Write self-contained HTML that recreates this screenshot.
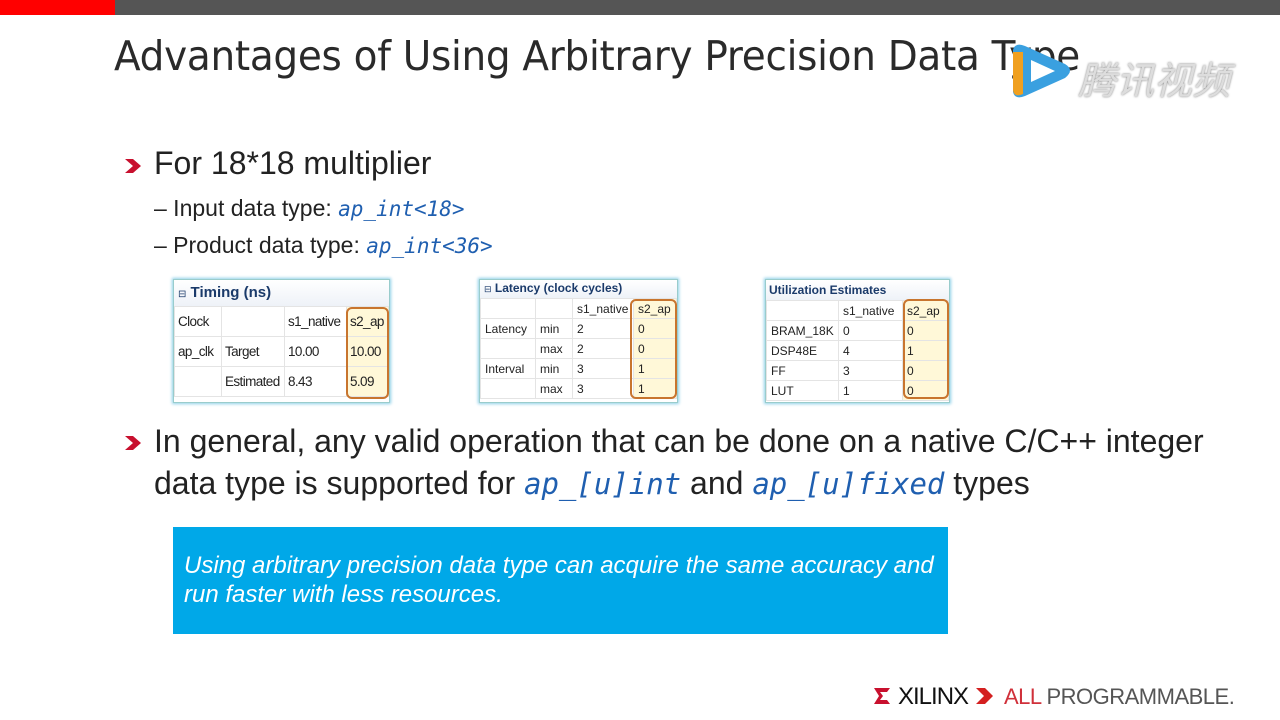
<!DOCTYPE html>
<html><head><meta charset="utf-8"><style>
body{margin:0;width:1280px;height:720px;position:relative;background:#fff;font-family:"Liberation Sans",Arial,sans-serif;overflow:hidden;color:#222}
.a{position:absolute;white-space:nowrap}
.code{font-family:"DejaVu Sans Mono",monospace;font-style:italic;color:#1f5fb0}
.chev{position:absolute;width:18px;height:18px}
.tb{position:absolute;background:#fff;border:1px solid #9cc;box-shadow:0 0 3px 1px #8fd0e8;font-size:12px;color:#222;overflow:hidden}
.tb table{border-collapse:collapse;table-layout:fixed;width:100%}
.tb td{border:1px solid #e4e4e4;padding:0 0 0 4px;height:19px;overflow:hidden;white-space:nowrap}
.hd{font-weight:bold;color:#1a3a6a;background:linear-gradient(#fff,#eef2f8)}
.y{background:#fff8d8}
.hl{position:absolute;border:2px solid #c8752e;border-radius:6px}
.nar td{font-size:13.5px;letter-spacing:-0.6px;padding-left:3px}
</style></head><body>
<div class="a" style="left:0;top:0;width:115px;height:15px;background:#f00"></div>
<div class="a" style="left:115px;top:0;width:1165px;height:15px;background:#555"></div>
<div class="a" style="left:114px;top:32px;font-size:41px;color:#2a2a2a;font-family:'DejaVu Sans',sans-serif;letter-spacing:-0.3px;transform:scaleX(0.95);transform-origin:left">Advantages of Using Arbitrary Precision Data Type</div>
<svg class="a" style="left:1005px;top:40px" width="80" height="64"><path d="M8 10 Q10 2 20 6 L60 24 Q70 30 60 38 L20 56 Q10 60 8 52Z" fill="#3aa0e0"/><path d="M8 12 L8 50 Q9 58 18 54 L18 12Z" fill="#f0a020"/><path d="M26 20 L50 31 L26 42Z" fill="#fff"/></svg>
<div class="a" style="left:1078px;top:50px;font-size:38px;color:#ddd;font-style:italic;font-family:'Noto Sans CJK SC',sans-serif;text-shadow:0 0 2px #777">腾讯视频</div>

<svg class="chev" style="left:124px;top:157px" viewBox="0 0 18 18"><path d="M1 2h8l8 7-8 7H1l8-7z" fill="#c8102e"/></svg>
<div class="a" style="left:154px;top:145px;font-size:32px">For 18*18 multiplier</div>
<div class="a" style="left:154px;top:195px;font-size:23px">– Input data type: <span class="code" style="font-size:21px">ap_int&lt;18&gt;</span></div>
<div class="a" style="left:154px;top:232px;font-size:23px">– Product data type: <span class="code" style="font-size:21px">ap_int&lt;36&gt;</span></div>

<div class="tb nar" style="left:173px;top:279px;width:215px;height:122px;font-size:15px">
<div style="height:26px;line-height:26px;padding-left:4px" class="hd"><span style="font-weight:normal;font-size:10px">⊟</span> Timing (ns)</div>
<table><colgroup><col style="width:47px"><col style="width:63px"><col style="width:62px"><col></colgroup>
<tr><td style="height:29px">Clock</td><td></td><td>s1_native</td><td class="y">s2_ap</td></tr>
<tr><td style="height:29px">ap_clk</td><td>Target</td><td>10.00</td><td class="y">10.00</td></tr>
<tr><td style="height:29px"></td><td>Estimated</td><td>8.43</td><td class="y">5.09</td></tr></table>
<div class="hl" style="left:172px;top:27px;width:39px;height:88px"></div></div>

<div class="tb" style="left:479px;top:279px;width:197px;height:122px;font-size:12px">
<div style="height:18px;line-height:17px;padding-left:4px" class="hd"><span style="font-weight:normal;font-size:9px">⊟</span> Latency (clock cycles)</div>
<table><colgroup><col style="width:55px"><col style="width:37px"><col style="width:61px"><col></colgroup>
<tr><td></td><td></td><td>s1_native</td><td class="y">s2_ap</td></tr>
<tr><td>Latency</td><td>min</td><td>2</td><td class="y">0</td></tr>
<tr><td></td><td>max</td><td>2</td><td class="y">0</td></tr>
<tr><td>Interval</td><td>min</td><td>3</td><td class="y">1</td></tr>
<tr><td></td><td>max</td><td>3</td><td class="y">1</td></tr></table>
<div class="hl" style="left:150px;top:19px;width:43px;height:96px"></div></div>

<div class="tb" style="left:765px;top:279px;width:183px;height:122px;font-size:12px">
<div style="height:20px;line-height:20px;padding-left:3px" class="hd">Utilization Estimates</div>
<table><colgroup><col style="width:72px"><col style="width:64px"><col></colgroup>
<tr><td></td><td>s1_native</td><td class="y">s2_ap</td></tr>
<tr><td>BRAM_18K</td><td>0</td><td class="y">0</td></tr>
<tr><td>DSP48E</td><td>4</td><td class="y">1</td></tr>
<tr><td>FF</td><td>3</td><td class="y">0</td></tr>
<tr><td>LUT</td><td>1</td><td class="y">0</td></tr></table>
<div class="hl" style="left:137px;top:19px;width:42px;height:96px"></div></div>

<svg class="chev" style="left:124px;top:434px" viewBox="0 0 18 18"><path d="M1 2h8l8 7-8 7H1l8-7z" fill="#c8102e"/></svg>
<div class="a" style="left:154px;top:423px;font-size:32px">In general, any valid operation that can be done on a native C/C++ integer</div>
<div class="a" style="left:154px;top:465px;font-size:32px">data type is supported for <span class="code" style="font-size:29px">ap_[u]int</span> and <span class="code" style="font-size:29px">ap_[u]fixed</span> types</div>

<div class="a" style="left:173px;top:527px;width:775px;height:107px;background:#00a8e8"></div>
<div class="a" style="left:184px;top:551px;font-size:24px;color:#fff;font-style:italic;line-height:29px">Using arbitrary precision data type can acquire the same accuracy and<br>run faster with less resources.</div>

<svg class="a" style="left:873px;top:687px" width="18" height="18" viewBox="0 0 18 18"><path d="M1 1h16l-3 4H7l3 4-3 4h7l3 4H1l5-8z" fill="#c8102e"/></svg>
<div class="a" style="left:898px;top:683px;font-size:24px;color:#111;letter-spacing:-1px">XILINX</div>
<svg class="a" style="left:975px;top:687px" width="20" height="18" viewBox="0 0 20 18"><path d="M1 1h9l8 8-8 8H1l8-8z" fill="#d42020"/></svg>
<div class="a" style="left:1004px;top:684px;font-size:22px;color:#d0303a;letter-spacing:-0.5px">ALL <span style="color:#555">PROGRAMMABLE.</span></div>
</body></html>
